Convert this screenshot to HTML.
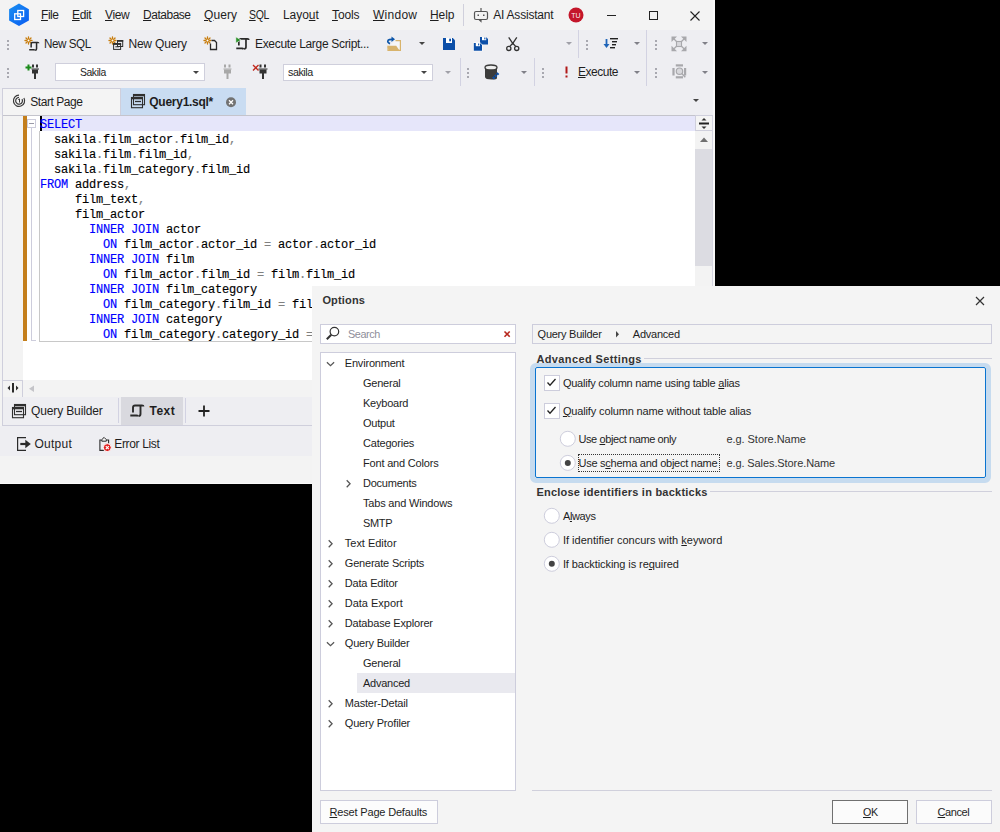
<!DOCTYPE html>
<html><head><meta charset="utf-8"><title>Options</title>
<style>
*{margin:0;padding:0;box-sizing:border-box}
html,body{width:1000px;height:832px;overflow:hidden}
body{background:#000;position:relative;font-family:"Liberation Sans",sans-serif;color:#1e1e1e}
.a{position:absolute}
.t{position:absolute;white-space:pre;line-height:1}
.t u{text-decoration:underline;text-underline-offset:1px}
.code{position:absolute;font-family:"Liberation Mono",monospace;font-size:12px;letter-spacing:-0.2px;line-height:15px;white-space:pre;color:#000;-webkit-text-stroke:0.15px}
</style></head><body>
<div class="a" style="left:0px;top:0px;width:715px;height:484px;background:#f3f3f3"></div>
<div class="a" style="left:0px;top:0px;width:714px;height:30px;background:#f3f3f3"></div>
<div class="t" style="left:41.00px;top:8.84px;font-size:12px;letter-spacing:-0.446px;"><u>F</u>ile</div>
<div class="t" style="left:72.00px;top:8.84px;font-size:12px;letter-spacing:-0.360px;"><u>E</u>dit</div>
<div class="t" style="left:105.00px;top:8.84px;font-size:12px;letter-spacing:-0.398px;"><u>V</u>iew</div>
<div class="t" style="left:143.00px;top:8.84px;font-size:12px;letter-spacing:-0.450px;transform:scaleX(0.9954);transform-origin:0 0;"><u>D</u>atabase</div>
<div class="t" style="left:204.00px;top:8.84px;font-size:12px;letter-spacing:0.080px;"><u>Q</u>uery</div>
<div class="t" style="left:248.75px;top:8.84px;font-size:12px;letter-spacing:-0.450px;transform:scaleX(0.8761);transform-origin:0 0;"><u>S</u>QL</div>
<div class="t" style="left:283.00px;top:8.84px;font-size:12px;letter-spacing:-0.056px;">Layo<u>u</u>t</div>
<div class="t" style="left:332.00px;top:8.84px;font-size:12px;letter-spacing:-0.129px;"><u>T</u>ools</div>
<div class="t" style="left:373.00px;top:8.84px;font-size:12px;letter-spacing:0.264px;"><u>W</u>indow</div>
<div class="t" style="left:430.00px;top:8.84px;font-size:12px;letter-spacing:-0.060px;"><u>H</u>elp</div>
<div class="a" style="left:463px;top:4px;width:1px;height:22px;background:#d0d0dc"></div>
<svg class="a" style="left:473px;top:7px;" width="16" height="16" viewBox="0 0 16 16"><rect x="1.5" y="4.5" width="13" height="8" rx="1.5" fill="none" stroke="#555" stroke-width="1.2"/><line x1="8" y1="1" x2="8" y2="4.5" stroke="#555" stroke-width="1.2"/><rect x="4.5" y="7.5" width="1.5" height="1.5" fill="#555"/><rect x="10" y="7.5" width="1.5" height="1.5" fill="#555"/><path d="M6 12.5 L8 14.5 L8 12.5" fill="none" stroke="#555" stroke-width="1.1"/></svg>
<div class="t" style="left:493.20px;top:8.84px;font-size:12px;letter-spacing:-0.209px;">AI Assistant</div>
<svg class="a" style="left:568px;top:7px;" width="16" height="16" viewBox="0 0 16 16"><circle cx="8" cy="8" r="7.5" fill="#c4162a"/><text x="8" y="10.6" font-size="7" fill="#fff" font-weight="normal" opacity="0.92" text-anchor="middle" font-family="Liberation Sans">TU</text></svg>
<div class="a" style="left:607px;top:15px;width:9px;height:1px;background:#222"></div>
<div class="a" style="left:649px;top:11px;width:9px;height:9px;border:1px solid #222"></div>
<svg class="a" style="left:690px;top:11px;" width="10" height="10" viewBox="0 0 10 10"><path d="M0.5 0.5 L9.5 9.5 M9.5 0.5 L0.5 9.5" stroke="#222" stroke-width="1.1"/></svg>
<div class="a" style="left:0px;top:30px;width:713px;height:58px;background:#eeeef2"></div>
<div class="a" style="left:7px;top:40px;width:2px;height:2px;background:#a8a8b0"></div>
<div class="a" style="left:7px;top:44px;width:2px;height:2px;background:#a8a8b0"></div>
<div class="a" style="left:7px;top:48px;width:2px;height:2px;background:#a8a8b0"></div>
<div class="a" style="left:7px;top:68px;width:2px;height:2px;background:#a8a8b0"></div>
<div class="a" style="left:7px;top:72px;width:2px;height:2px;background:#a8a8b0"></div>
<div class="a" style="left:7px;top:76px;width:2px;height:2px;background:#a8a8b0"></div>
<div class="t" style="left:44.40px;top:37.84px;font-size:12px;letter-spacing:-0.450px;transform:scaleX(0.9701);transform-origin:0 0;">New SQL</div>
<div class="t" style="left:128.40px;top:37.84px;font-size:12px;letter-spacing:-0.178px;">New Query</div>
<div class="t" style="left:255.00px;top:37.84px;font-size:12px;letter-spacing:-0.318px;">Execute Large Script...</div>
<svg class="a" style="left:418.5px;top:42px;" width="6" height="3" viewBox="0 0 6 3"><polygon points="0,0 6,0 3,3" fill="#444"/></svg>
<svg class="a" style="left:566px;top:42px;" width="6" height="3" viewBox="0 0 6 3"><polygon points="0,0 6,0 3,3" fill="#a0a0a8"/></svg>
<div class="a" style="left:578px;top:30px;width:1px;height:28px;background:#d2d2e2"></div>
<div class="a" style="left:586px;top:40px;width:2px;height:2px;background:#a8a8b0"></div>
<div class="a" style="left:586px;top:44px;width:2px;height:2px;background:#a8a8b0"></div>
<div class="a" style="left:586px;top:48px;width:2px;height:2px;background:#a8a8b0"></div>
<svg class="a" style="left:634px;top:42px;" width="6" height="3" viewBox="0 0 6 3"><polygon points="0,0 6,0 3,3" fill="#808088"/></svg>
<div class="a" style="left:646px;top:30px;width:1px;height:28px;background:#d2d2e2"></div>
<div class="a" style="left:655px;top:40px;width:2px;height:2px;background:#a8a8b0"></div>
<div class="a" style="left:655px;top:44px;width:2px;height:2px;background:#a8a8b0"></div>
<div class="a" style="left:655px;top:48px;width:2px;height:2px;background:#a8a8b0"></div>
<svg class="a" style="left:702px;top:42px;" width="6" height="3" viewBox="0 0 6 3"><polygon points="0,0 6,0 3,3" fill="#808088"/></svg>
<div class="a" style="left:55px;top:63px;width:150px;height:18px;background:#fff;border:1px solid #cfcfdc"></div>
<div class="t" style="left:79.80px;top:66.69px;font-size:11px;letter-spacing:-0.450px;transform:scaleX(0.9455);transform-origin:0 0;">Sakila</div>
<svg class="a" style="left:193px;top:71px;" width="6" height="3" viewBox="0 0 6 3"><polygon points="0,0 6,0 3,3" fill="#444"/></svg>
<div class="a" style="left:283px;top:64px;width:150px;height:17px;background:#fff;border:1px solid #cfcfdc"></div>
<div class="t" style="left:287.50px;top:66.69px;font-size:11px;letter-spacing:-0.450px;transform:scaleX(0.9740);transform-origin:0 0;">sakila</div>
<svg class="a" style="left:421px;top:71px;" width="6" height="3" viewBox="0 0 6 3"><polygon points="0,0 6,0 3,3" fill="#444"/></svg>
<svg class="a" style="left:444.5px;top:71px;" width="6" height="3" viewBox="0 0 6 3"><polygon points="0,0 6,0 3,3" fill="#a0a0a8"/></svg>
<div class="a" style="left:460px;top:58px;width:1px;height:28px;background:#d2d2e2"></div>
<div class="a" style="left:467px;top:68px;width:2px;height:2px;background:#a8a8b0"></div>
<div class="a" style="left:467px;top:72px;width:2px;height:2px;background:#a8a8b0"></div>
<div class="a" style="left:467px;top:76px;width:2px;height:2px;background:#a8a8b0"></div>
<svg class="a" style="left:521px;top:71px;" width="6" height="3" viewBox="0 0 6 3"><polygon points="0,0 6,0 3,3" fill="#808088"/></svg>
<div class="a" style="left:534px;top:58px;width:1px;height:28px;background:#d2d2e2"></div>
<div class="a" style="left:542px;top:68px;width:2px;height:2px;background:#a8a8b0"></div>
<div class="a" style="left:542px;top:72px;width:2px;height:2px;background:#a8a8b0"></div>
<div class="a" style="left:542px;top:76px;width:2px;height:2px;background:#a8a8b0"></div>
<div class="t" style="left:578.20px;top:66.24px;font-size:12px;letter-spacing:-0.450px;transform:scaleX(0.9960);transform-origin:0 0;"><u>E</u>xecute</div>
<svg class="a" style="left:634px;top:71px;" width="6" height="3" viewBox="0 0 6 3"><polygon points="0,0 6,0 3,3" fill="#808088"/></svg>
<div class="a" style="left:646px;top:58px;width:1px;height:28px;background:#d2d2e2"></div>
<div class="a" style="left:655px;top:68px;width:2px;height:2px;background:#a8a8b0"></div>
<div class="a" style="left:655px;top:72px;width:2px;height:2px;background:#a8a8b0"></div>
<div class="a" style="left:655px;top:76px;width:2px;height:2px;background:#a8a8b0"></div>
<svg class="a" style="left:702px;top:71px;" width="6" height="3" viewBox="0 0 6 3"><polygon points="0,0 6,0 3,3" fill="#808088"/></svg>
<div class="a" style="left:0px;top:86px;width:713px;height:29px;background:#eeeef2"></div>
<div class="a" style="left:2px;top:88px;width:119px;height:28px;background:#f4f4f4;border:1px solid #cfcfdc;border-bottom:none"></div>
<div class="t" style="left:30.20px;top:96.34px;font-size:12px;letter-spacing:-0.434px;">Start Page</div>
<div class="a" style="left:121px;top:88px;width:125px;height:28px;background:#c9dcf2"></div>
<div class="t" style="left:149.30px;top:96.34px;font-size:12px;letter-spacing:-0.270px;font-weight:bold;">Query1.sql*</div>
<svg class="a" style="left:693px;top:99px;" width="6" height="3" viewBox="0 0 6 3"><polygon points="0,0 6,0 3,3" fill="#444"/></svg>
<div class="a" style="left:2px;top:115px;width:712px;height:1px;background:#c4c4cc"></div>
<div class="a" style="left:2px;top:115px;width:1px;height:282px;background:#cfcfdc"></div>
<div class="a" style="left:3px;top:116px;width:20px;height:264px;background:#f3f3f3"></div>
<div class="a" style="left:23px;top:116px;width:672px;height:264px;background:#fff"></div>
<div class="a" style="left:40px;top:116px;width:655px;height:15px;background:#e6e6fa"></div>
<div class="a" style="left:23px;top:116px;width:4px;height:225px;background:#c47f1c"></div>
<div class="a" style="left:27px;top:119px;width:9px;height:9px;background:#fff;border:1px solid #cdcddc"></div>
<div class="a" style="left:29px;top:123px;width:5px;height:1px;background:#9a9aa8"></div>
<div class="a" style="left:31px;top:128px;width:1px;height:213px;background:#cdcddc"></div>
<div class="a" style="left:31px;top:340px;width:5px;height:1px;background:#cdcddc"></div>
<div class="a" style="left:39px;top:131px;width:1px;height:211px;background:#c8c8c8"></div>
<div class="a" style="left:39px;top:341px;width:656px;height:1px;background:#c8c8c8"></div>
<div class="a" style="left:40px;top:116px;width:2px;height:15px;background:#000"></div>
<div class="code" style="left:40px;top:118px;"><span style="color:#0000ff">SELECT</span>
  sakila<span style="color:#808080">.</span>film_actor<span style="color:#808080">.</span>film_id<span style="color:#808080">,</span>
  sakila<span style="color:#808080">.</span>film<span style="color:#808080">.</span>film_id<span style="color:#808080">,</span>
  sakila<span style="color:#808080">.</span>film_category<span style="color:#808080">.</span>film_id
<span style="color:#0000ff">FROM</span> address<span style="color:#808080">,</span>
     film_text<span style="color:#808080">,</span>
     film_actor
<span style="color:#0000ff">       INNER JOIN</span> actor
<span style="color:#0000ff">         ON</span> film_actor<span style="color:#808080">.</span>actor_id <span style="color:#808080">=</span> actor<span style="color:#808080">.</span>actor_id
<span style="color:#0000ff">       INNER JOIN</span> film
<span style="color:#0000ff">         ON</span> film_actor<span style="color:#808080">.</span>film_id <span style="color:#808080">=</span> film<span style="color:#808080">.</span>film_id
<span style="color:#0000ff">       INNER JOIN</span> film_category
<span style="color:#0000ff">         ON</span> film_category<span style="color:#808080">.</span>film_id <span style="color:#808080">=</span> film_category<span style="color:#808080">.</span>film_id
<span style="color:#0000ff">       INNER JOIN</span> category
<span style="color:#0000ff">         ON</span> film_category<span style="color:#808080">.</span>category_id <span style="color:#808080">=</span> category<span style="color:#808080">.</span>category_id</div>
<div class="a" style="left:695px;top:116px;width:18px;height:170px;background:#f3f3f3"></div>
<div class="a" style="left:695px;top:115px;width:18px;height:16px;background:#f4f4f4;border:1px solid #cfcfdc"></div>
<div class="a" style="left:695px;top:149px;width:18px;height:117px;background:#dcdce2"></div>
<div class="a" style="left:712px;top:116px;width:1px;height:170px;background:#d4d4e0"></div>
<div class="a" style="left:713px;top:0px;width:2px;height:484px;background:#f8f8f8"></div>
<div class="a" style="left:3px;top:380px;width:710px;height:17px;background:#f3f3f3"></div>
<div class="a" style="left:2px;top:380px;width:21px;height:17px;border-top:1px solid #cfcfdc;border-right:1px solid #cfcfdc"></div>
<div class="a" style="left:2px;top:397px;width:711px;height:29px;background:#eeeef2;border-left:1px solid #cfcfdc;border-bottom:1px solid #cfcfdc"></div>
<div class="t" style="left:31.00px;top:405.04px;font-size:12px;letter-spacing:-0.131px;">Query Builder</div>
<div class="a" style="left:118px;top:398px;width:1px;height:25px;background:#d2d2e2"></div>
<div class="a" style="left:121px;top:397px;width:62px;height:28px;background:#d9d9df"></div>
<div class="t" style="left:149.50px;top:405.04px;font-size:12px;letter-spacing:0.505px;font-weight:bold;">Text</div>
<div class="a" style="left:185px;top:398px;width:1px;height:25px;background:#d2d2e2"></div>
<div class="a" style="left:0px;top:426px;width:713px;height:30px;background:#eeeef2"></div>
<div class="a" style="left:0px;top:483px;width:715px;height:1px;background:#fafafa"></div>
<div class="t" style="left:34.50px;top:437.84px;font-size:12px;letter-spacing:0.255px;">Output</div>
<div class="t" style="left:114.30px;top:437.84px;font-size:12px;letter-spacing:-0.353px;">Error List</div>
<svg class="a" style="left:0;top:0" width="1000" height="832"><defs><linearGradient id="lg" x1="0" y1="0" x2="1" y2="1"><stop offset="0" stop-color="#1a90f0"/><stop offset="1" stop-color="#0a5cf2"/></linearGradient></defs><polygon points="19,3.6 28.9,9.3 28.9,20.5 19,26 9.1,20.5 9.1,9.3" fill="url(#lg)"/><rect x="17.8" y="10.5" width="5.8" height="6" fill="none" stroke="#fff" stroke-width="1.3"/><rect x="14.7" y="13.8" width="5.8" height="5.7" fill="none" stroke="#fff" stroke-width="1.3"/><g stroke="#c87d0e" stroke-width="1.3" stroke-linecap="round"><line x1="25.0" y1="40.5" x2="32.0" y2="40.5"/><line x1="28.5" y1="37.0" x2="28.5" y2="44.0"/><line x1="26.0" y1="38.0" x2="31.0" y2="43.0"/><line x1="31.0" y1="38.0" x2="26.0" y2="43.0"/></g><circle cx="28.5" cy="40.5" r="1" fill="#fff"/><g transform="translate(29,41.5) scale(0.72)" fill="none" stroke="#2a2a2a" stroke-width="2.08" stroke-linecap="butt"><path d="M3 8.5 V3.5 Q3 1.5 5 1.5 H12 Q13.5 1.5 13.5 2.6"/><path d="M10.5 1.5 V10 Q10.5 12 8.5 12"/><path d="M0.3 11.5 H6.5 Q7.5 11.5 8 12.3"/></g><g stroke="#c87d0e" stroke-width="1.3" stroke-linecap="round"><line x1="109.0" y1="40.5" x2="116.0" y2="40.5"/><line x1="112.5" y1="37.0" x2="112.5" y2="44.0"/><line x1="110.0" y1="38.0" x2="115.0" y2="43.0"/><line x1="115.0" y1="38.0" x2="110.0" y2="43.0"/></g><circle cx="112.5" cy="40.5" r="1" fill="#fff"/><g fill="none" stroke="#2f2f2f" stroke-width="1"><rect x="117.5" y="40.5" width="5.2" height="6"/><rect x="113.6" y="43.6" width="7" height="5.8"/></g><rect x="117" y="40" width="6.2" height="1.8" fill="#2f2f2f"/><rect x="113.1" y="43.1" width="8" height="1.8" fill="#2f2f2f"/><rect x="115.3" y="46.3" width="3.6" height="1" fill="#2f2f2f"/><g stroke="#c87d0e" stroke-width="1.3" stroke-linecap="round"><line x1="204.0" y1="40.5" x2="211.0" y2="40.5"/><line x1="207.5" y1="37.0" x2="207.5" y2="44.0"/><line x1="205.0" y1="38.0" x2="210.0" y2="43.0"/><line x1="210.0" y1="38.0" x2="205.0" y2="43.0"/></g><circle cx="207.5" cy="40.5" r="1" fill="#fff"/><path d="M210.5 43.5 V49.5 H216.5 V42.5 L214.5 40.5 H211.5" fill="#f4f4f4" stroke="#2a2a2a" stroke-width="1.3"/><g transform="translate(236,37.5) scale(0.95)" fill="none" stroke="#2a2a2a" stroke-width="1.79" stroke-linecap="butt"><path d="M3 8.5 V3.5 Q3 1.5 5 1.5 H12 Q13.5 1.5 13.5 2.6"/><path d="M10.5 1.5 V10 Q10.5 12 8.5 12"/><path d="M0.3 11.5 H6.5 Q7.5 11.5 8 12.3"/></g><polygon points="235.8,36.8 235.8,43.2 241,40" fill="#2a8f2a" stroke="#fff" stroke-width="0.6"/><path d="M388 47 V50.4 H400.4 V40.6 H395.5" fill="#f6f6f8" stroke="#d8b36c" stroke-width="1.2"/><polygon points="387,45.8 396.2,45.8 399.8,51 389,51" fill="#d8b36c"/><path d="M390 43.6 Q386.8 42.3 388.2 40.2 Q389.2 39.2 392.3 39.3" fill="none" stroke="#0b54a8" stroke-width="1.7"/><polygon points="391.5,36.6 395,39.3 391.5,42" fill="#0b54a8"/><path d="M443 38 H452.8 L455 40.2 V50 H443 Z" fill="#0b4ea8"/><rect x="446" y="38" width="6" height="5" fill="#fff"/><rect x="449.2" y="38.7" width="1.8" height="2.6" fill="#0b4ea8"/><path d="M480 37 H486 L488 39 V44.6 H480 Z" fill="#0b4ea8"/><rect x="482" y="37" width="4.2" height="3.2" fill="#fff"/><rect x="484.3" y="37.5" width="1.1" height="1.9" fill="#0b4ea8"/><path d="M473.3 42.5 H480.3 L482.5 44.7 V51.3 H473.3 Z" fill="#fff"/><path d="M473.8 43 H480 L482 45 V50.8 H473.8 Z" fill="#0b4ea8"/><rect x="475.8" y="43" width="4.2" height="3.2" fill="#fff"/><rect x="478.1" y="43.5" width="1.1" height="1.9" fill="#0b4ea8"/><g fill="none" stroke="#333" stroke-width="1.3"><circle cx="508.8" cy="48.4" r="2.1"/><circle cx="516.7" cy="48.4" r="2.1"/><path d="M509.8 46.4 L512.8 43.3 L516.8 37.4 M515.7 46.4 L512.7 43.3 L508.7 37.4"/></g><rect x="511.9" y="42.6" width="1.8" height="1.8" fill="#333"/><g stroke="#222" stroke-width="1.4"><line x1="610" y1="38.7" x2="618" y2="38.7"/><line x1="612" y1="41.7" x2="617" y2="41.7"/><line x1="612" y1="44.7" x2="616" y2="44.7"/><line x1="610" y1="47.7" x2="615" y2="47.7"/></g><path d="M606.5 39 V46" stroke="#1f64b8" stroke-width="1.8"/><polygon points="603.5,44 609.5,44 606.5,48" fill="#1f64b8"/><g fill="#a8a8ac"><polygon points="671.5,36.5 677,36.5 671.5,42"/><polygon points="686.5,36.5 681,36.5 686.5,42"/><polygon points="671.5,51.3 677,51.3 671.5,45.8"/><polygon points="686.5,51.3 681,51.3 686.5,45.8"/></g><g stroke="#a8a8ac" stroke-width="1.3"><line x1="672.5" y1="37.5" x2="676.5" y2="41.5"/><line x1="685.5" y1="37.5" x2="681.5" y2="41.5"/><line x1="672.5" y1="50.3" x2="676.5" y2="46.3"/><line x1="685.5" y1="50.3" x2="681.5" y2="46.3"/></g><rect x="676.5" y="41.5" width="5" height="5" fill="#d8d8dc" stroke="#a8a8ac" stroke-width="1.1"/><path d="M25.5 67.5 H31.5 M28.5 64.5 V70.5" stroke="#1a8a1a" stroke-width="2"/><rect x="32" y="64.5" width="2" height="3" fill="#333"/><rect x="36" y="64.5" width="2" height="3" fill="#333"/><rect x="31.5" y="68.5" width="7.5" height="1" fill="#333"/><rect x="32" y="69.5" width="6" height="4" fill="#333"/><rect x="34" y="73" width="2" height="6" fill="#333"/><g fill="#a8a8a8"><rect x="224" y="64.5" width="2" height="3"/><rect x="228.5" y="64.5" width="2" height="3"/><rect x="223.5" y="68.5" width="8" height="1"/><rect x="224" y="69.5" width="7" height="4"/><rect x="226.5" y="73" width="2" height="6"/></g><path d="M253 65 L258.5 70.5 M258.5 65 L253 70.5" stroke="#c0281c" stroke-width="1.3"/><g fill="#333"><rect x="259.5" y="64.5" width="2" height="3"/><rect x="264" y="64.5" width="2" height="3"/><rect x="258.5" y="68.5" width="9" height="1"/><rect x="259.5" y="69.5" width="7" height="4"/><rect x="262" y="73" width="2" height="6"/></g><path d="M485 67.5 V77 Q485 79.5 492 79.5 Q497 79.5 497 78 V67.5" fill="#3c3c3c"/><ellipse cx="491" cy="67.5" rx="6" ry="2.5" fill="#eee" stroke="#3c3c3c" stroke-width="1.3"/><path d="M493 78.5 L498.5 73" stroke="#0b4ea8" stroke-width="2.6" stroke-dasharray="2 0.8"/><rect x="565.5" y="66.5" width="2" height="7" fill="#b01818"/><rect x="565.5" y="75.5" width="2" height="2" fill="#b01818"/><g fill="#a8a8ac"><rect x="675.8" y="64.3" width="7.2" height="2.2"/><rect x="675.8" y="76.2" width="7.2" height="2.2"/><rect x="672.4" y="68" width="2.2" height="7.5"/><rect x="684" y="68" width="2.2" height="7.5"/></g><circle cx="679.5" cy="71.2" r="3.2" fill="#d8d8dc" stroke="#a8a8ac" stroke-width="1.2"/><line x1="681.8" y1="73.5" x2="685.3" y2="77.3" stroke="#a8a8ac" stroke-width="1.4"/><g fill="none" stroke="#3a3a3a" stroke-width="1.2"><path d="M23.9 98 A5.6 5.6 0 1 1 19 95.2"/><path d="M22 99.1 A3.4 3.4 0 1 1 19 97.4"/></g><path d="M18.3 99.6 L19.5 98.9 V102.6" stroke="#3a3a3a" stroke-width="1" fill="none"/><g fill="none" stroke="#2f2f2f" stroke-width="1.1"><rect x="133.5" y="94.5" width="11" height="10.2"/><rect x="131.5" y="97.5" width="11" height="10.2"/><line x1="135" y1="101.5" x2="141" y2="101.5" stroke-width="1.3"/></g><rect x="133" y="94" width="12" height="2.3" fill="#2f2f2f"/><rect x="131" y="97" width="12" height="2.3" fill="#2f2f2f"/><circle cx="231" cy="102.3" r="5" fill="#727272"/><path d="M229 100.3 L233 104.3 M233 100.3 L229 104.3" stroke="#fff" stroke-width="1.3"/><rect x="699" y="122.5" width="10" height="2" fill="#222"/><polygon points="701.5,120.5 706.5,120.5 704,118" fill="#333"/><polygon points="701.5,126.5 706.5,126.5 704,129" fill="#333"/><polygon points="700,142 708,142 704,137.5" fill="#707070"/><rect x="12" y="383" width="2" height="9.5" fill="#2a2a2a"/><polygon points="10,385.5 10,390.5 7.5,388" fill="#2a2a2a"/><polygon points="16,385.5 16,390.5 18.5,388" fill="#2a2a2a"/><polygon points="34,385.5 34,392 29,388.7" fill="#c4c4c8"/><g fill="none" stroke="#2f2f2f" stroke-width="1.1"><rect x="14.5" y="404.5" width="11" height="10.2"/><rect x="12.5" y="407.5" width="11" height="10.2"/><line x1="16" y1="411.5" x2="22" y2="411.5" stroke-width="1.3"/></g><rect x="14" y="404" width="12" height="2.3" fill="#2f2f2f"/><rect x="12" y="407" width="12" height="2.3" fill="#2f2f2f"/><g transform="translate(130,404) scale(1.0)" fill="none" stroke="#2a2a2a" stroke-width="1.90" stroke-linecap="butt"><path d="M3 8.5 V3.5 Q3 1.5 5 1.5 H12 Q13.5 1.5 13.5 2.6"/><path d="M10.5 1.5 V10 Q10.5 12 8.5 12"/><path d="M0.3 11.5 H6.5 Q7.5 11.5 8 12.3"/></g><path d="M198.5 411 H209.5 M204 405.5 V416.5" stroke="#222" stroke-width="1.8"/><path d="M26 437.6 H17.6 V450.4 H26" fill="none" stroke="#2a2a2a" stroke-width="1.2"/><path d="M20.3 444 H26.5" stroke="#2a2a2a" stroke-width="2.2"/><polygon points="25.3,439.8 30.8,444 25.3,448.2" fill="#2a2a2a"/><path d="M101.6 440 H99.9 V450.4 H104.5 M106.4 440 H108.6 V443.5" fill="none" stroke="#2a2a2a" stroke-width="1.1"/><path d="M101.8 441.2 V439.6 L104.1 437.4 L106.3 439.6 V441.2 Z" fill="#f4f4f4" stroke="#2a2a2a" stroke-width="1"/><circle cx="107.3" cy="447.6" r="4" fill="#e02020" stroke="#fff" stroke-width="1"/><path d="M105.8 446.1 L108.8 449.1 M108.8 446.1 L105.8 449.1" stroke="#fff" stroke-width="1.2"/></svg>
<div class="a" style="left:312px;top:286px;width:688px;height:546px;background:#f4f4f4"></div>
<div class="t" style="left:322.40px;top:295.09px;font-size:11px;letter-spacing:0.175px;font-weight:bold;color:#333;">Options</div>
<div class="a" style="left:320px;top:324px;width:196px;height:20px;background:#fff;border:1px solid #cdcddc"></div>
<div class="t" style="left:347.80px;top:329.09px;font-size:11px;letter-spacing:-0.450px;transform:scaleX(0.9876);transform-origin:0 0;color:#8e8e9a;">Search</div>
<div class="a" style="left:320px;top:352px;width:196px;height:439px;background:#fff;border:1px solid #cdcddc"></div>
<div class="t" style="left:344.80px;top:357.59px;font-size:11px;letter-spacing:-0.195px;color:#1e1e1e;">Environment</div>
<div class="t" style="left:363.00px;top:377.59px;font-size:11px;letter-spacing:-0.228px;color:#1e1e1e;">General</div>
<div class="t" style="left:363.00px;top:397.59px;font-size:11px;letter-spacing:-0.235px;color:#1e1e1e;">Keyboard</div>
<div class="t" style="left:363.00px;top:417.59px;font-size:11px;letter-spacing:-0.231px;color:#1e1e1e;">Output</div>
<div class="t" style="left:363.00px;top:437.59px;font-size:11px;letter-spacing:-0.207px;color:#1e1e1e;">Categories</div>
<div class="t" style="left:363.00px;top:457.59px;font-size:11px;letter-spacing:-0.183px;color:#1e1e1e;">Font and Colors</div>
<div class="t" style="left:363.00px;top:477.59px;font-size:11px;letter-spacing:-0.243px;color:#1e1e1e;">Documents</div>
<div class="t" style="left:363.00px;top:497.59px;font-size:11px;letter-spacing:-0.195px;color:#1e1e1e;">Tabs and Windows</div>
<div class="t" style="left:363.00px;top:517.59px;font-size:11px;letter-spacing:-0.356px;color:#1e1e1e;">SMTP</div>
<div class="t" style="left:344.80px;top:537.59px;font-size:11px;letter-spacing:-0.017px;color:#1e1e1e;">Text Editor</div>
<div class="t" style="left:344.80px;top:557.59px;font-size:11px;letter-spacing:-0.203px;color:#1e1e1e;">Generate Scripts</div>
<div class="t" style="left:344.80px;top:577.59px;font-size:11px;letter-spacing:-0.183px;color:#1e1e1e;">Data Editor</div>
<div class="t" style="left:344.80px;top:597.59px;font-size:11px;letter-spacing:-0.018px;color:#1e1e1e;">Data Export</div>
<div class="t" style="left:344.80px;top:617.59px;font-size:11px;letter-spacing:-0.182px;color:#1e1e1e;">Database Explorer</div>
<div class="t" style="left:344.80px;top:637.59px;font-size:11px;letter-spacing:-0.196px;color:#1e1e1e;">Query Builder</div>
<div class="t" style="left:363.00px;top:657.59px;font-size:11px;letter-spacing:-0.228px;color:#1e1e1e;">General</div>
<div class="a" style="left:357px;top:673px;width:158px;height:20px;background:#e9e9ef"></div>
<div class="t" style="left:363.00px;top:677.59px;font-size:11px;letter-spacing:-0.245px;color:#1e1e1e;">Advanced</div>
<div class="t" style="left:344.80px;top:697.59px;font-size:11px;letter-spacing:-0.191px;color:#1e1e1e;">Master-Detail</div>
<div class="t" style="left:344.80px;top:717.59px;font-size:11px;letter-spacing:-0.183px;color:#1e1e1e;">Query Profiler</div>
<div class="a" style="left:320px;top:800px;width:118px;height:24px;background:#fcfcfc;border:1px solid #cdcddc"></div>
<div class="t" style="left:329.50px;top:806.79px;font-size:11px;letter-spacing:-0.172px;color:#1e1e1e;"><u>R</u>eset Page Defaults</div>
<div class="a" style="left:532px;top:324px;width:460px;height:20px;border:1px solid #cdcddc"></div>
<div class="t" style="left:537.60px;top:328.69px;font-size:11px;letter-spacing:-0.254px;color:#1e1e1e;">Query Builder</div>
<div class="t" style="left:632.80px;top:328.69px;font-size:11px;letter-spacing:-0.247px;color:#1e1e1e;">Advanced</div>
<div class="a" style="left:530px;top:363px;width:461px;height:120px;border:5px solid #c6dbef;border-top-width:4px;border-radius:6px"></div>
<div class="a" style="left:535px;top:367px;width:451px;height:111px;border:1px solid #0a74d0;border-radius:2px"></div>
<div class="t" style="left:536.40px;top:354.19px;font-size:11px;letter-spacing:0.380px;font-weight:bold;color:#333;">Advanced Settings</div>
<div class="a" style="left:644px;top:358px;width:348px;height:1px;background:#d0d0dc"></div>
<div class="a" style="left:544px;top:375px;width:16px;height:16px;background:#fff;border:1px solid #cdcddc"></div>
<div class="t" style="left:562.90px;top:378.39px;font-size:11px;letter-spacing:-0.227px;color:#1e1e1e;">Qualify column name using table <u>a</u>lias</div>
<div class="a" style="left:544px;top:403px;width:16px;height:16px;background:#fff;border:1px solid #cdcddc"></div>
<div class="t" style="left:562.90px;top:406.39px;font-size:11px;letter-spacing:-0.143px;color:#1e1e1e;"><u>Q</u>ualify column name without table alias</div>
<div class="t" style="left:578.50px;top:434.39px;font-size:11px;letter-spacing:-0.410px;color:#1e1e1e;">Use <u>o</u>bject name only</div>
<div class="t" style="left:726.40px;top:434.39px;font-size:11px;letter-spacing:-0.043px;color:#333;">e.g. Store.Name</div>
<div class="a" style="left:578px;top:454px;width:142px;height:18px;border:1px dotted #333"></div>
<div class="t" style="left:578.50px;top:458.39px;font-size:11px;letter-spacing:-0.261px;color:#1e1e1e;">Use s<u>c</u>hema and object name</div>
<div class="t" style="left:726.40px;top:458.39px;font-size:11px;letter-spacing:-0.093px;color:#333;">e.g. Sales.Store.Name</div>
<div class="t" style="left:536.40px;top:487.19px;font-size:11px;letter-spacing:0.231px;font-weight:bold;color:#333;">Enclose identifiers in backticks</div>
<div class="a" style="left:710px;top:491px;width:282px;height:1px;background:#d0d0dc"></div>
<div class="t" style="left:562.90px;top:511.39px;font-size:11px;letter-spacing:-0.368px;color:#1e1e1e;">A<u>l</u>ways</div>
<div class="t" style="left:562.90px;top:535.39px;font-size:11px;letter-spacing:0.016px;color:#1e1e1e;">If identifier concurs with <u>k</u>eyword</div>
<div class="t" style="left:562.90px;top:559.39px;font-size:11px;letter-spacing:-0.080px;color:#1e1e1e;">If backticking is re<u>q</u>uired</div>
<div class="a" style="left:532px;top:790px;width:460px;height:1px;background:#d0d0dc"></div>
<div class="a" style="left:832px;top:800px;width:76px;height:24px;background:#fbfbfb;border:1px solid #707070"></div>
<div class="t" style="left:862.60px;top:807.09px;font-size:11px;letter-spacing:-0.450px;transform:scaleX(0.9713);transform-origin:0 0;color:#1e1e1e;"><u>O</u>K</div>
<div class="a" style="left:916px;top:800px;width:76px;height:24px;background:#fbfbfb;border:1px solid #cdcddc"></div>
<div class="t" style="left:937.60px;top:807.09px;font-size:11px;letter-spacing:-0.448px;color:#1e1e1e;"><u>C</u>ancel</div>
<svg class="a" style="left:0;top:0" width="1000" height="832"><path d="M976 297 L984 305 M984 297 L976 305" stroke="#333" stroke-width="1.2"/><circle cx="334.4" cy="331.6" r="4.3" fill="none" stroke="#333" stroke-width="1.2"/><path d="M331.3 334.8 L326.8 339.3" stroke="#333" stroke-width="2"/><path d="M504.5 331.5 L509.7 336.7 M509.7 331.5 L504.5 336.7" stroke="#b8281e" stroke-width="1.6"/><path d="M326.9 362.3 L330.5 365.7 L334.1 362.3" fill="none" stroke="#555" stroke-width="1.25"/><path d="M346.7 480.2 L350.1 483.7 L346.7 487.2" fill="none" stroke="#555" stroke-width="1.25"/><path d="M328.7 540.2 L332.1 543.7 L328.7 547.2" fill="none" stroke="#555" stroke-width="1.25"/><path d="M328.7 560.2 L332.1 563.7 L328.7 567.2" fill="none" stroke="#555" stroke-width="1.25"/><path d="M328.7 580.2 L332.1 583.7 L328.7 587.2" fill="none" stroke="#555" stroke-width="1.25"/><path d="M328.7 600.2 L332.1 603.7 L328.7 607.2" fill="none" stroke="#555" stroke-width="1.25"/><path d="M328.7 620.2 L332.1 623.7 L328.7 627.2" fill="none" stroke="#555" stroke-width="1.25"/><path d="M326.9 642.3 L330.5 645.7 L334.1 642.3" fill="none" stroke="#555" stroke-width="1.25"/><path d="M328.7 700.2 L332.1 703.7 L328.7 707.2" fill="none" stroke="#555" stroke-width="1.25"/><path d="M328.7 720.2 L332.1 723.7 L328.7 727.2" fill="none" stroke="#555" stroke-width="1.25"/><polygon points="616,331 616,337.5 619,334.2" fill="#444"/><path d="M547.5 382.5 L550 385.2 L555.5 379" fill="none" stroke="#222" stroke-width="1.3"/><path d="M547.5 410.5 L550 413.2 L555.5 407" fill="none" stroke="#222" stroke-width="1.3"/><circle cx="567.8" cy="438.8" r="7.5" fill="#fff" stroke="#cdcddc" stroke-width="1"/><circle cx="567.8" cy="462.9" r="7.5" fill="#fff" stroke="#cdcddc" stroke-width="1"/><circle cx="567.8" cy="462.9" r="3" fill="#444"/><circle cx="551.8" cy="515.8" r="7.5" fill="#fff" stroke="#cdcddc" stroke-width="1"/><circle cx="551.8" cy="539.8" r="7.5" fill="#fff" stroke="#cdcddc" stroke-width="1"/><circle cx="551.8" cy="563.8" r="7.5" fill="#fff" stroke="#cdcddc" stroke-width="1"/><circle cx="551.8" cy="563.8" r="3" fill="#444"/></svg>
</body></html>
